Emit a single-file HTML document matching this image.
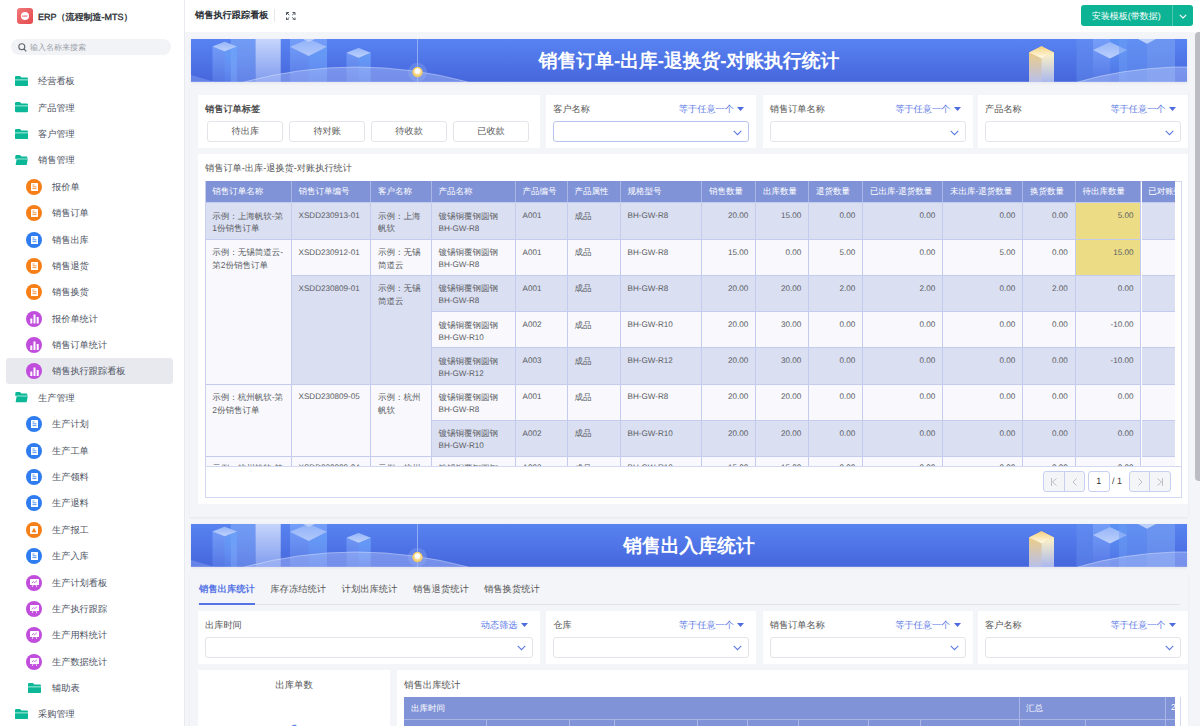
<!DOCTYPE html><html><head><meta charset="utf-8"><style>
*{box-sizing:border-box;margin:0;padding:0}
html,body{width:1200px;height:726px;overflow:hidden;background:#fff}
body{font-family:"Liberation Sans",sans-serif;color:#555;position:relative;text-rendering:geometricPrecision}
.abs{position:absolute}
#side{position:absolute;left:0;top:0;width:185px;height:726px;background:#fff;border-right:1px solid #e9eaef}
.logo{position:absolute;left:17px;top:8px;width:16px;height:16px;border-radius:3px;background:linear-gradient(135deg,#f0787a,#e5484d)}
.logo i{position:absolute;left:4px;top:4px;width:8px;height:8px;border-radius:50%;background:#fff}
.appname{position:absolute;left:38px;top:10px;font-size:9px;line-height:14px;color:#2b2f36;white-space:nowrap;-webkit-text-stroke:0.35px #2b2f36}
.search{position:absolute;left:11px;top:39px;width:160px;height:16px;border-radius:8px;background:#f2f3f6}
.search span{position:absolute;left:19px;top:2.8px;font-size:8px;line-height:12px;color:#9aa0a8}
.mi{position:absolute;left:0;height:26px;width:184px;font-size:9.2px;line-height:26px;color:#4c5262;white-space:nowrap}
.mi .t{position:absolute;top:0}
.fold{position:absolute;width:13px;height:10.3px;top:7.6px}
.circ{position:absolute;left:26px;top:5px;width:16px;height:16px;border-radius:50%}
#main{position:absolute;left:185px;top:0;width:1015px;height:726px;background:#f4f5f9}
#hdr{position:absolute;left:0;top:0;width:1015px;height:32px;background:#fff}
.htitle{position:absolute;left:10px;top:9px;font-size:9.2px;line-height:13px;font-weight:bold;color:#2b2f36;white-space:nowrap}
.sep{position:absolute;left:89px;top:9px;width:1px;height:13px;background:#e6e7eb}
.btn-g{position:absolute;left:895.8px;top:5.25px;width:112.2px;height:21px;border-radius:3px;background:#0db395;color:#fff;font-size:9px;line-height:21px}
.sb{display:none}
.sbthumb{position:absolute;left:1194.5px;top:32.4px;width:8px;height:449px;border-radius:4px;background:#bbbdc2}
.banner{position:absolute;left:191px;width:996px;height:43px;overflow:hidden;background:#4f74e6;box-shadow:0 1px 3px rgba(40,40,80,0.08)}
.banner .bt{position:absolute;left:0;top:0;width:100%;text-align:center;color:#fff;font-weight:bold;white-space:nowrap}
.sect{position:absolute;left:190px;width:998px;background:#f4f5f9;box-shadow:0 1px 2px rgba(40,40,80,0.07)}
.card{position:absolute;background:#fff}
.lbl{position:absolute;left:7px;top:8px;font-size:9.2px;line-height:13px;color:#555;white-space:nowrap}
.op{position:absolute;top:8px;font-size:9.2px;line-height:13px;color:#5a78e6;white-space:nowrap}
.sel{position:absolute;left:7px;top:26px;height:21px;border:1px solid #e3e5ea;border-radius:3px;background:#fff}
.tagb{position:absolute;top:25.5px;width:76px;height:21px;border:1px solid #e3e5ea;border-radius:3px;font-size:9.2px;line-height:19px;text-align:center;color:#555}
.th{position:absolute;top:0;height:21.6px;background:#8193d7;color:#fff;border-right:1px solid #aab6e6;font-size:8.5px;line-height:21.6px;padding:0 6.7px;white-space:nowrap;overflow:hidden}
.td{position:absolute;border-right:1px solid #c3cbee;border-top:1px solid #c3cbee;font-size:8.5px;line-height:12.6px;padding:6.5px 4px 0 6.7px;color:#5a5d63;overflow:hidden;word-break:break-all}
.td.r{text-align:right;padding-right:7px}
.lt{font-size:8.1px;position:relative;top:-0.7px}
.tab{top:584px;font-size:9.3px;line-height:10px;color:#555;white-space:nowrap}
.pgt{font-size:9px;line-height:21px}
.tbl{position:absolute;border-collapse:collapse;table-layout:fixed}
.tbl td{border:1px solid #c3cbee;font-size:8.6px;line-height:12.5px;vertical-align:top;padding:6px 6px 0 6px;color:#5a5d63;overflow:hidden;white-space:normal;word-break:break-all}
.tbl th{background:#8193d7;color:#fff;font-weight:normal;border:1px solid #aab6e6;font-size:8.6px;line-height:12px;text-align:left;padding:0 6px;height:21.5px;white-space:nowrap;overflow:hidden}
.tbl td.r{text-align:right}
.b{background:#dadff2}
.wt{background:#f8f8fd}
.y{background:#ecdc86}
</style></head><body>
<div id="side">
<div class="logo"><i></i><b style="position:absolute;left:4px;top:6.6px;width:8px;text-align:center;font-size:2.6px;line-height:3px;color:#e5484d;font-weight:bold">ERP</b></div><div class="appname">ERP（流程制造-MTS）</div>
<div class="search"><svg class="abs" style="left:7px;top:4px" width="9" height="9" viewBox="0 0 9 9"><circle cx="3.8" cy="3.8" r="3" fill="none" stroke="#5f646b" stroke-width="1.1"/><line x1="6" y1="6" x2="8.3" y2="8.3" stroke="#5f646b" stroke-width="1.1"/></svg><span>输入名称来搜索</span></div>
<div class="mi" style="top:68.30px">
<svg class="fold" style="left:14.8px" viewBox="0 0 13 10.3"><path d="M0 1.2Q0 0 1.2 0H5L6.4 1.6H11.8Q13 1.6 13 2.8V9.1Q13 10.3 11.8 10.3H1.2Q0 10.3 0 9.1Z" fill="#0bb797"/><rect x="0" y="3" width="13" height="1.6" fill="#6fd8c2"/></svg>
<span class="t" style="left:38px">经营看板</span></div>
<div class="mi" style="top:94.68px">
<svg class="fold" style="left:14.8px" viewBox="0 0 13 10.3"><path d="M0 1.2Q0 0 1.2 0H5L6.4 1.6H11.8Q13 1.6 13 2.8V9.1Q13 10.3 11.8 10.3H1.2Q0 10.3 0 9.1Z" fill="#0bb797"/><rect x="0" y="3" width="13" height="1.6" fill="#6fd8c2"/></svg>
<span class="t" style="left:38px">产品管理</span></div>
<div class="mi" style="top:121.06px">
<svg class="fold" style="left:14.8px" viewBox="0 0 13 10.3"><path d="M0 1.2Q0 0 1.2 0H5L6.4 1.6H11.8Q13 1.6 13 2.8V9.1Q13 10.3 11.8 10.3H1.2Q0 10.3 0 9.1Z" fill="#0bb797"/><rect x="0" y="3" width="13" height="1.6" fill="#6fd8c2"/></svg>
<span class="t" style="left:38px">客户管理</span></div>
<div class="mi" style="top:147.44px">
<svg class="fold" style="left:14.8px" viewBox="0 0 13 10.3"><path d="M0.3 1.2Q0.3 0 1.5 0H5L6.4 1.4H11.3Q12.3 1.4 12.3 2.4V4H0.3Z" fill="#0bb797"/><path d="M1.6 4.2H12.8L11.6 10.3H0.6Z" fill="#0bb797"/><path d="M1.6 3.8H12.8" stroke="#7fdcc8" stroke-width="0.9"/></svg>
<span class="t" style="left:38px">销售管理</span></div>
<div class="mi" style="top:173.82px">
<div class="circ" style="background:#f77f17"><svg class="abs" style="left:4.5px;top:4px" width="7" height="8" viewBox="0 0 7 8"><rect x="0" y="0" width="7" height="8" rx="0.6" fill="#fff"/><path d="M1.5 2H3.5M1.5 3.8H5.5M1.5 5.6H5.5" stroke="#f77f17" stroke-width="0.8"/></svg></div>
<span class="t" style="left:52px">报价单</span></div>
<div class="mi" style="top:200.20px">
<div class="circ" style="background:#f77f17"><svg class="abs" style="left:4.5px;top:4px" width="7" height="8" viewBox="0 0 7 8"><rect x="0" y="0" width="7" height="8" rx="0.6" fill="#fff"/><path d="M1.5 2H3.5M1.5 3.8H5.5M1.5 5.6H5.5" stroke="#f77f17" stroke-width="0.8"/></svg></div>
<span class="t" style="left:52px">销售订单</span></div>
<div class="mi" style="top:226.58px">
<div class="circ" style="background:#2f7cf0"><svg class="abs" style="left:4.5px;top:4px" width="7" height="8" viewBox="0 0 7 8"><rect x="0" y="0" width="7" height="8" rx="0.6" fill="#fff"/><path d="M1.5 2H3.5M1.5 3.8H5.5M1.5 5.6H5.5" stroke="#2f7cf0" stroke-width="0.8"/></svg></div>
<span class="t" style="left:52px">销售出库</span></div>
<div class="mi" style="top:252.96px">
<div class="circ" style="background:#f77f17"><svg class="abs" style="left:4.5px;top:4px" width="7" height="8" viewBox="0 0 7 8"><rect x="0" y="0" width="7" height="8" rx="0.6" fill="#fff"/><path d="M1.5 2H3.5M1.5 3.8H5.5M1.5 5.6H5.5" stroke="#f77f17" stroke-width="0.8"/></svg></div>
<span class="t" style="left:52px">销售退货</span></div>
<div class="mi" style="top:279.34px">
<div class="circ" style="background:#f77f17"><svg class="abs" style="left:4.5px;top:4px" width="7" height="8" viewBox="0 0 7 8"><rect x="0" y="0" width="7" height="8" rx="0.6" fill="#fff"/><path d="M1.5 2H3.5M1.5 3.8H5.5M1.5 5.6H5.5" stroke="#f77f17" stroke-width="0.8"/></svg></div>
<span class="t" style="left:52px">销售换货</span></div>
<div class="mi" style="top:305.72px">
<div class="circ" style="background:#c04ddc"><svg class="abs" style="left:4px;top:3.5px" width="9" height="9.5" viewBox="0 0 9 9.5"><rect x="0.3" y="4.5" width="2" height="5" fill="#fff"/><rect x="3.5" y="0.5" width="2" height="9" fill="#fff"/><rect x="6.7" y="3" width="2" height="6.5" fill="#fff"/></svg></div>
<span class="t" style="left:52px">报价单统计</span></div>
<div class="mi" style="top:332.10px">
<div class="circ" style="background:#c04ddc"><svg class="abs" style="left:4px;top:3.5px" width="9" height="9.5" viewBox="0 0 9 9.5"><rect x="0.3" y="4.5" width="2" height="5" fill="#fff"/><rect x="3.5" y="0.5" width="2" height="9" fill="#fff"/><rect x="6.7" y="3" width="2" height="6.5" fill="#fff"/></svg></div>
<span class="t" style="left:52px">销售订单统计</span></div>
<div class="mi" style="top:358.48px">
<div class="abs" style="left:6px;top:-0.6px;width:167px;height:26.4px;border-radius:3px;background:#e8e9ee"></div>
<div class="circ" style="background:#c04ddc"><svg class="abs" style="left:4px;top:3.5px" width="9" height="9.5" viewBox="0 0 9 9.5"><rect x="0.3" y="4.5" width="2" height="5" fill="#fff"/><rect x="3.5" y="0.5" width="2" height="9" fill="#fff"/><rect x="6.7" y="3" width="2" height="6.5" fill="#fff"/></svg></div>
<span class="t" style="left:52px">销售执行跟踪看板</span></div>
<div class="mi" style="top:384.86px">
<svg class="fold" style="left:14.8px" viewBox="0 0 13 10.3"><path d="M0.3 1.2Q0.3 0 1.5 0H5L6.4 1.4H11.3Q12.3 1.4 12.3 2.4V4H0.3Z" fill="#0bb797"/><path d="M1.6 4.2H12.8L11.6 10.3H0.6Z" fill="#0bb797"/><path d="M1.6 3.8H12.8" stroke="#7fdcc8" stroke-width="0.9"/></svg>
<span class="t" style="left:38px">生产管理</span></div>
<div class="mi" style="top:411.24px">
<div class="circ" style="background:#2f7cf0"><svg class="abs" style="left:4.5px;top:4px" width="7" height="8" viewBox="0 0 7 8"><rect x="0" y="0" width="7" height="8" rx="0.6" fill="#fff"/><path d="M1.5 2H3.5M1.5 3.8H5.5M1.5 5.6H5.5" stroke="#2f7cf0" stroke-width="0.8"/></svg></div>
<span class="t" style="left:52px">生产计划</span></div>
<div class="mi" style="top:437.62px">
<div class="circ" style="background:#2f7cf0"><svg class="abs" style="left:4.5px;top:4px" width="7" height="8" viewBox="0 0 7 8"><rect x="0" y="0" width="7" height="8" rx="0.6" fill="#fff"/><path d="M1.5 2H3.5M1.5 3.8H5.5M1.5 5.6H5.5" stroke="#2f7cf0" stroke-width="0.8"/></svg></div>
<span class="t" style="left:52px">生产工单</span></div>
<div class="mi" style="top:464.00px">
<div class="circ" style="background:#2f7cf0"><svg class="abs" style="left:4.5px;top:4px" width="7" height="8" viewBox="0 0 7 8"><rect x="0" y="0" width="7" height="8" rx="0.6" fill="#fff"/><path d="M1.5 2H3.5M1.5 3.8H5.5M1.5 5.6H5.5" stroke="#2f7cf0" stroke-width="0.8"/></svg></div>
<span class="t" style="left:52px">生产领料</span></div>
<div class="mi" style="top:490.38px">
<div class="circ" style="background:#2f7cf0"><svg class="abs" style="left:4.5px;top:4px" width="7" height="8" viewBox="0 0 7 8"><rect x="0" y="0" width="7" height="8" rx="0.6" fill="#fff"/><path d="M1.5 2H3.5M1.5 3.8H5.5M1.5 5.6H5.5" stroke="#2f7cf0" stroke-width="0.8"/></svg></div>
<span class="t" style="left:52px">生产退料</span></div>
<div class="mi" style="top:516.76px">
<div class="circ" style="background:#f77f17"><svg class="abs" style="left:4px;top:4px" width="8" height="8" viewBox="0 0 8 8"><rect x="0" y="0" width="8" height="8" rx="1" fill="#fff"/><path d="M4 1.8L6.4 6.2H1.6Z" fill="#f77f17"/></svg></div>
<span class="t" style="left:52px">生产报工</span></div>
<div class="mi" style="top:543.14px">
<div class="circ" style="background:#2f7cf0"><svg class="abs" style="left:4.5px;top:4px" width="7" height="8" viewBox="0 0 7 8"><rect x="0" y="0" width="7" height="8" rx="0.6" fill="#fff"/><path d="M1.5 2H3.5M1.5 3.8H5.5M1.5 5.6H5.5" stroke="#2f7cf0" stroke-width="0.8"/></svg></div>
<span class="t" style="left:52px">生产入库</span></div>
<div class="mi" style="top:569.52px">
<div class="circ" style="background:#c04ddc"><svg class="abs" style="left:3.5px;top:4px" width="9" height="8" viewBox="0 0 9 8"><rect x="0" y="0" width="9" height="6" rx="0.6" fill="#fff"/><path d="M1.8 4.2L3.4 2.6L4.8 3.6L7 1.6" stroke="#c04ddc" stroke-width="0.8" fill="none"/><path d="M3 6L2.2 8M6 6L6.8 8" stroke="#fff" stroke-width="0.8"/></svg></div>
<span class="t" style="left:52px">生产计划看板</span></div>
<div class="mi" style="top:595.90px">
<div class="circ" style="background:#c04ddc"><svg class="abs" style="left:3.5px;top:4px" width="9" height="8" viewBox="0 0 9 8"><rect x="0" y="0" width="9" height="6" rx="0.6" fill="#fff"/><path d="M1.8 4.2L3.4 2.6L4.8 3.6L7 1.6" stroke="#c04ddc" stroke-width="0.8" fill="none"/><path d="M3 6L2.2 8M6 6L6.8 8" stroke="#fff" stroke-width="0.8"/></svg></div>
<span class="t" style="left:52px">生产执行跟踪</span></div>
<div class="mi" style="top:622.28px">
<div class="circ" style="background:#c04ddc"><svg class="abs" style="left:3.5px;top:4px" width="9" height="8" viewBox="0 0 9 8"><rect x="0" y="0" width="9" height="6" rx="0.6" fill="#fff"/><path d="M1.8 4.2L3.4 2.6L4.8 3.6L7 1.6" stroke="#c04ddc" stroke-width="0.8" fill="none"/><path d="M3 6L2.2 8M6 6L6.8 8" stroke="#fff" stroke-width="0.8"/></svg></div>
<span class="t" style="left:52px">生产用料统计</span></div>
<div class="mi" style="top:648.66px">
<div class="circ" style="background:#c04ddc"><svg class="abs" style="left:3.5px;top:4px" width="9" height="8" viewBox="0 0 9 8"><rect x="0" y="0" width="9" height="6" rx="0.6" fill="#fff"/><path d="M1.8 4.2L3.4 2.6L4.8 3.6L7 1.6" stroke="#c04ddc" stroke-width="0.8" fill="none"/><path d="M3 6L2.2 8M6 6L6.8 8" stroke="#fff" stroke-width="0.8"/></svg></div>
<span class="t" style="left:52px">生产数据统计</span></div>
<div class="mi" style="top:675.04px">
<svg class="fold" style="left:28px" viewBox="0 0 13 10.3"><path d="M0 1.2Q0 0 1.2 0H5L6.4 1.6H11.8Q13 1.6 13 2.8V9.1Q13 10.3 11.8 10.3H1.2Q0 10.3 0 9.1Z" fill="#0bb797"/><rect x="0" y="3" width="13" height="1.6" fill="#6fd8c2"/></svg>
<span class="t" style="left:52px">辅助表</span></div>
<div class="mi" style="top:701.42px">
<svg class="fold" style="left:14.8px" viewBox="0 0 13 10.3"><path d="M0 1.2Q0 0 1.2 0H5L6.4 1.6H11.8Q13 1.6 13 2.8V9.1Q13 10.3 11.8 10.3H1.2Q0 10.3 0 9.1Z" fill="#0bb797"/><rect x="0" y="3" width="13" height="1.6" fill="#6fd8c2"/></svg>
<span class="t" style="left:38px">采购管理</span></div>
</div>
<div id="main">
<div id="hdr"><div class="htitle">销售执行跟踪看板</div><div class="sep"></div>
<svg class="abs" style="left:101px;top:11.5px" width="9.5" height="8.5" viewBox="0 0 9.5 8.5" fill="none" stroke="#4f5866" stroke-width="1"><path d="M0.5 3V0.5H3M0.8 0.8L3.3 3.1M6.5 0.5H9V3M8.7 0.8L6.2 3.1M9 5.5V8H6.5M8.7 7.7L6.2 5.4M3 8H0.5V5.5M0.8 7.7L3.3 5.4"/></svg>
<div class="btn-g"><span class="abs" style="left:11px;top:0.5px">安装模板(带数据)</span><div class="abs" style="left:91.5px;top:0;width:1px;height:21px;background:#4fc9ae"></div><svg class="abs" style="left:98.5px;top:8.5px" width="8" height="5" viewBox="0 0 8 5"><path d="M0.8 0.8L4 4L7.2 0.8" stroke="#fff" stroke-width="1.1" fill="none"/></svg></div>
</div>
</div>
<div class="banner" style="top:39px"><svg class="abs" style="left:0;top:0" width="996" height="43" viewBox="0 0 996 43">
<defs>
<linearGradient id="bg0" x1="0" y1="0" x2="0" y2="1"><stop offset="0" stop-color="#5883f1"/><stop offset="1" stop-color="#4666dc"/></linearGradient>
<linearGradient id="fL" x1="0" y1="0" x2="0" y2="1"><stop offset="0" stop-color="#8cb4ff" stop-opacity="0.55"/><stop offset="1" stop-color="#8cb4ff" stop-opacity="0.2"/></linearGradient>
<linearGradient id="fR" x1="0" y1="0" x2="0" y2="1"><stop offset="0" stop-color="#5d9cf5" stop-opacity="0.6"/><stop offset="1" stop-color="#6aa0ff" stop-opacity="0.15"/></linearGradient>
<linearGradient id="pM" x1="0" y1="0" x2="0" y2="1"><stop offset="0" stop-color="#79a4f6" stop-opacity="0.75"/><stop offset="1" stop-color="#7fa0f0" stop-opacity="0.5"/></linearGradient>
<linearGradient id="pC" x1="0" y1="0" x2="0" y2="1"><stop offset="0" stop-color="#c6d5fc"/><stop offset="1" stop-color="#809cee"/></linearGradient>
<linearGradient id="dm" x1="0" y1="0" x2="0" y2="1"><stop offset="0" stop-color="#97b6f8"/><stop offset="1" stop-color="#bcd0fc"/></linearGradient>
<linearGradient id="gL" x1="0" y1="0" x2="0" y2="1"><stop offset="0" stop-color="#f6cf72"/><stop offset="1" stop-color="#b9c0ea"/></linearGradient>
<linearGradient id="gR" x1="0" y1="0" x2="0" y2="1"><stop offset="0" stop-color="#fff3c4"/><stop offset="1" stop-color="#aab8ee"/></linearGradient>
<linearGradient id="gT" x1="0" y1="0" x2="0" y2="1"><stop offset="0" stop-color="#f6d27e"/><stop offset="1" stop-color="#fffbea"/></linearGradient>
<radialGradient id="dot" cx="0.5" cy="0.5" r="0.5" fx="0.5" fy="0.32"><stop offset="0" stop-color="#fff"/><stop offset="0.38" stop-color="#fff"/><stop offset="0.6" stop-color="#f6d98a"/><stop offset="0.85" stop-color="#eec766"/><stop offset="1" stop-color="#eec766" stop-opacity="0"/></radialGradient><radialGradient id="glow"><stop offset="0" stop-color="#f6e2a8" stop-opacity="0.35"/><stop offset="1" stop-color="#c9d6ff" stop-opacity="0"/></radialGradient>
</defs>
<rect width="996" height="43" fill="url(#bg0)"/>
<path d="M0 36L24 43H0Z" fill="#8aa4f2" opacity="0.45"/>
<rect x="39.8" y="0" width="24.7" height="43" fill="url(#pM)"/>
<rect x="64.5" y="0" width="25.2" height="43" fill="url(#pC)"/>
<path d="M21.5 7.4L33.6 2.7L45.9 7.4V43H21.5Z" fill="url(#fL)"/>
<path d="M33.6 12.3L45.9 7.4V43H33.6Z" fill="url(#fR)"/>
<path d="M21.5 7.4L33.6 2.7L45.9 7.4L33.6 12.3Z" fill="url(#dm)"/>
<path d="M99 0H136V43H99Z" fill="url(#fL)"/>
<path d="M117.7 16.9L136 7.7V43H117.7Z" fill="url(#fR)"/>
<path d="M99 7.7L117.7 0L136 7.7L117.7 16.9Z" fill="url(#dm)" opacity="0.85"/>
<path d="M112 0H124L117.7 3.1Z" fill="#bcd0fc" opacity="0.9"/>
<path d="M155.5 13.7L167.6 8.9L179.7 13.7V43H155.5Z" fill="url(#fL)"/>
<path d="M167.6 18.7L179.7 13.7V43H167.6Z" fill="url(#fR)"/>
<path d="M155.5 13.7L167.6 8.9L179.7 13.7L167.6 18.7Z" fill="url(#dm)"/>
<path d="M53 43Q165 13 277 43Z" fill="#b4c6fb" opacity="0.42"/>
<path d="M53 43Q165 13 277 43" fill="none" stroke="#dbe5ff" stroke-width="0.7" opacity="0.7"/>
<rect x="226.2" y="0" width="0.8" height="43" fill="#a9c0fb" opacity="0.9"/>
<circle cx="226.5" cy="33.2" r="9.5" fill="#9fb6f6" opacity="0.28"/>
<circle cx="226.5" cy="33.2" r="5.6" fill="url(#dot)"/>
<path d="M838 13.6L850.5 7.3L863 13.6V43H838Z" fill="url(#gL)"/>
<path d="M850.5 19.3L863 13.6V43H850.5Z" fill="url(#gR)"/>
<path d="M838 13.6L850.5 7.3L863 13.6L850.5 19.3Z" fill="url(#gT)"/>
<rect x="885.5" y="0" width="16.5" height="43" fill="#6f9af2" opacity="0.35"/>
<path d="M902 0H919V43H902Z" fill="url(#fL)"/>
<path d="M919 0H936V43H919Z" fill="url(#fR)"/>
<path d="M902 11L919 3L936 11L919 19.5Z" fill="url(#dm)"/>
<rect x="928" y="0" width="28" height="43" fill="#6b9cf3" opacity="0.5"/>
<rect x="956" y="0" width="28" height="43" fill="#7ea6f3" opacity="0.55"/>
<path d="M947 0H965L956 4.8Z" fill="#bcd0fc"/>
<path d="M887 43Q930 30 984 28H996V43Z" fill="#b4c6fb" opacity="0.45"/>
<path d="M887 43Q930 30 984 28H996" fill="none" stroke="#dbe5ff" stroke-width="0.7" opacity="0.7"/>
<rect x="0" y="42.3" width="996" height="0.7" fill="#b9c8f8" opacity="0.4"/>
</svg><div class="bt" style="top:10.5px;font-size:18.8px;line-height:22px">销售订单-出库-退换货-对账执行统计</div></div>
<div class="banner" style="top:524px"><svg class="abs" style="left:0;top:0" width="996" height="43" viewBox="0 0 996 43">
<defs>
<linearGradient id="bg0" x1="0" y1="0" x2="0" y2="1"><stop offset="0" stop-color="#5883f1"/><stop offset="1" stop-color="#4666dc"/></linearGradient>
<linearGradient id="fL" x1="0" y1="0" x2="0" y2="1"><stop offset="0" stop-color="#8cb4ff" stop-opacity="0.55"/><stop offset="1" stop-color="#8cb4ff" stop-opacity="0.2"/></linearGradient>
<linearGradient id="fR" x1="0" y1="0" x2="0" y2="1"><stop offset="0" stop-color="#5d9cf5" stop-opacity="0.6"/><stop offset="1" stop-color="#6aa0ff" stop-opacity="0.15"/></linearGradient>
<linearGradient id="pM" x1="0" y1="0" x2="0" y2="1"><stop offset="0" stop-color="#79a4f6" stop-opacity="0.75"/><stop offset="1" stop-color="#7fa0f0" stop-opacity="0.5"/></linearGradient>
<linearGradient id="pC" x1="0" y1="0" x2="0" y2="1"><stop offset="0" stop-color="#c6d5fc"/><stop offset="1" stop-color="#809cee"/></linearGradient>
<linearGradient id="dm" x1="0" y1="0" x2="0" y2="1"><stop offset="0" stop-color="#97b6f8"/><stop offset="1" stop-color="#bcd0fc"/></linearGradient>
<linearGradient id="gL" x1="0" y1="0" x2="0" y2="1"><stop offset="0" stop-color="#f6cf72"/><stop offset="1" stop-color="#b9c0ea"/></linearGradient>
<linearGradient id="gR" x1="0" y1="0" x2="0" y2="1"><stop offset="0" stop-color="#fff3c4"/><stop offset="1" stop-color="#aab8ee"/></linearGradient>
<linearGradient id="gT" x1="0" y1="0" x2="0" y2="1"><stop offset="0" stop-color="#f6d27e"/><stop offset="1" stop-color="#fffbea"/></linearGradient>
<radialGradient id="dot" cx="0.5" cy="0.5" r="0.5" fx="0.5" fy="0.32"><stop offset="0" stop-color="#fff"/><stop offset="0.38" stop-color="#fff"/><stop offset="0.6" stop-color="#f6d98a"/><stop offset="0.85" stop-color="#eec766"/><stop offset="1" stop-color="#eec766" stop-opacity="0"/></radialGradient><radialGradient id="glow"><stop offset="0" stop-color="#f6e2a8" stop-opacity="0.35"/><stop offset="1" stop-color="#c9d6ff" stop-opacity="0"/></radialGradient>
</defs>
<rect width="996" height="43" fill="url(#bg0)"/>
<path d="M0 36L24 43H0Z" fill="#8aa4f2" opacity="0.45"/>
<rect x="39.8" y="0" width="24.7" height="43" fill="url(#pM)"/>
<rect x="64.5" y="0" width="25.2" height="43" fill="url(#pC)"/>
<path d="M21.5 7.4L33.6 2.7L45.9 7.4V43H21.5Z" fill="url(#fL)"/>
<path d="M33.6 12.3L45.9 7.4V43H33.6Z" fill="url(#fR)"/>
<path d="M21.5 7.4L33.6 2.7L45.9 7.4L33.6 12.3Z" fill="url(#dm)"/>
<path d="M99 0H136V43H99Z" fill="url(#fL)"/>
<path d="M117.7 16.9L136 7.7V43H117.7Z" fill="url(#fR)"/>
<path d="M99 7.7L117.7 0L136 7.7L117.7 16.9Z" fill="url(#dm)" opacity="0.85"/>
<path d="M112 0H124L117.7 3.1Z" fill="#bcd0fc" opacity="0.9"/>
<path d="M155.5 13.7L167.6 8.9L179.7 13.7V43H155.5Z" fill="url(#fL)"/>
<path d="M167.6 18.7L179.7 13.7V43H167.6Z" fill="url(#fR)"/>
<path d="M155.5 13.7L167.6 8.9L179.7 13.7L167.6 18.7Z" fill="url(#dm)"/>
<path d="M53 43Q165 13 277 43Z" fill="#b4c6fb" opacity="0.42"/>
<path d="M53 43Q165 13 277 43" fill="none" stroke="#dbe5ff" stroke-width="0.7" opacity="0.7"/>
<rect x="226.2" y="0" width="0.8" height="43" fill="#a9c0fb" opacity="0.9"/>
<circle cx="226.5" cy="33.2" r="9.5" fill="#9fb6f6" opacity="0.28"/>
<circle cx="226.5" cy="33.2" r="5.6" fill="url(#dot)"/>
<path d="M838 13.6L850.5 7.3L863 13.6V43H838Z" fill="url(#gL)"/>
<path d="M850.5 19.3L863 13.6V43H850.5Z" fill="url(#gR)"/>
<path d="M838 13.6L850.5 7.3L863 13.6L850.5 19.3Z" fill="url(#gT)"/>
<rect x="885.5" y="0" width="16.5" height="43" fill="#6f9af2" opacity="0.35"/>
<path d="M902 0H919V43H902Z" fill="url(#fL)"/>
<path d="M919 0H936V43H919Z" fill="url(#fR)"/>
<path d="M902 11L919 3L936 11L919 19.5Z" fill="url(#dm)"/>
<rect x="928" y="0" width="28" height="43" fill="#6b9cf3" opacity="0.5"/>
<rect x="956" y="0" width="28" height="43" fill="#7ea6f3" opacity="0.55"/>
<path d="M947 0H965L956 4.8Z" fill="#bcd0fc"/>
<path d="M887 43Q930 30 984 28H996V43Z" fill="#b4c6fb" opacity="0.45"/>
<path d="M887 43Q930 30 984 28H996" fill="none" stroke="#dbe5ff" stroke-width="0.7" opacity="0.7"/>
<rect x="0" y="42.3" width="996" height="0.7" fill="#b9c8f8" opacity="0.4"/>
</svg><div class="bt" style="top:10.5px;font-size:18.8px;line-height:22px">销售出入库统计</div></div>
<div class="sect" style="top:89px;height:428px"></div>
<div class="card" style="left:198px;top:95px;width:342px;height:53px">
<div class="lbl" style="color:#333;top:7.5px;-webkit-text-stroke:0.2px #333">销售订单标签</div>
<div class="tagb" style="left:9.3px">待出库</div>
<div class="tagb" style="left:91.2px">待对账</div>
<div class="tagb" style="left:173.1px">待收款</div>
<div class="tagb" style="left:255.0px">已收款</div>
</div>
<div class="card" style="left:546.2px;top:95.0px;width:210.3px;height:53px"><div class="lbl">客户名称</div><div class="op" style="right:12px;padding-right:10.5px">等于任意一个<svg class="abs" style="right:0;top:4px" width="7" height="4" viewBox="0 0 7 4"><path d="M0 0H7L3.5 4Z" fill="#4d6ae0"/></svg></div><div class="sel" style="width:196.3px;border-color:#b9c4f0"><svg class="abs" style="right:6px;top:7.5px" width="9" height="6" viewBox="0 0 9 6"><path d="M0.7 0.9L4.5 4.7L8.3 0.9" stroke="#5a78e6" stroke-width="1.05" fill="none"/></svg></div></div>
<div class="card" style="left:762.8px;top:95.0px;width:210.0px;height:53px"><div class="lbl">销售订单名称</div><div class="op" style="right:12px;padding-right:10.5px">等于任意一个<svg class="abs" style="right:0;top:4px" width="7" height="4" viewBox="0 0 7 4"><path d="M0 0H7L3.5 4Z" fill="#4d6ae0"/></svg></div><div class="sel" style="width:196.0px;"><svg class="abs" style="right:6px;top:7.5px" width="9" height="6" viewBox="0 0 9 6"><path d="M0.7 0.9L4.5 4.7L8.3 0.9" stroke="#5a78e6" stroke-width="1.05" fill="none"/></svg></div></div>
<div class="card" style="left:978.0px;top:95.0px;width:210.0px;height:53px"><div class="lbl">产品名称</div><div class="op" style="right:12px;padding-right:10.5px">等于任意一个<svg class="abs" style="right:0;top:4px" width="7" height="4" viewBox="0 0 7 4"><path d="M0 0H7L3.5 4Z" fill="#4d6ae0"/></svg></div><div class="sel" style="width:196.0px;"><svg class="abs" style="right:6px;top:7.5px" width="9" height="6" viewBox="0 0 9 6"><path d="M0.7 0.9L4.5 4.7L8.3 0.9" stroke="#5a78e6" stroke-width="1.05" fill="none"/></svg></div></div>
<div class="card" style="left:198px;top:154px;width:990px;height:350px">
<div class="abs" style="left:7px;top:8px;font-size:9.2px;line-height:13px;color:#555;white-space:nowrap">销售订单-出库-退换货-对账执行统计</div>
<div class="abs" style="left:6.5px;top:26.5px;width:977px;height:317px;border:1px solid #d3d9f2"></div>
</div>
<div class="abs" style="left:204.5px;top:181px;width:970.6px;height:285.2px;overflow:hidden"><div class="th" style="left:0.0px;width:87.3px;padding-left:7.7px">销售订单名称</div><div class="th" style="left:87.3px;width:79.5px">销售订单编号</div><div class="th" style="left:166.8px;width:60.5px">客户名称</div><div class="th" style="left:227.3px;width:84.0px">产品名称</div><div class="th" style="left:311.3px;width:52.0px">产品编号</div><div class="th" style="left:363.3px;width:53.0px">产品属性</div><div class="th" style="left:416.3px;width:81.5px">规格型号</div><div class="th" style="left:497.8px;width:54.0px">销售数量</div><div class="th" style="left:551.8px;width:53.0px">出库数量</div><div class="th" style="left:604.8px;width:54.0px">退货数量</div><div class="th" style="left:658.8px;width:80.0px">已出库-退货数量</div><div class="th" style="left:738.8px;width:80.0px">未出库-退货数量</div><div class="th" style="left:818.8px;width:52.5px">换货数量</div><div class="th" style="left:871.3px;width:65.7px">待出库数量</div><div class="th" style="left:937.0px;width:74.3px">已对账数量</div><div class="td" style="left:0.0px;top:21.4px;width:87.3px;height:36.2px;background:#dadff2;padding-left:7.7px">示例：上海帆软-第1份销售订单</div><div class="td" style="left:87.3px;top:21.4px;width:79.5px;height:36.2px;background:#dadff2"><span class="lt">XSDD230913-01</span></div><div class="td" style="left:166.8px;top:21.4px;width:60.5px;height:36.2px;background:#dadff2">示例：上海帆软</div><div class="td" style="left:0.0px;top:57.7px;width:87.3px;height:145.0px;background:#f8f8fd;padding-left:7.7px">示例：无锡简道云-第2份销售订单</div><div class="td" style="left:87.3px;top:57.7px;width:79.5px;height:36.2px;background:#f8f8fd"><span class="lt">XSDD230912-01</span></div><div class="td" style="left:166.8px;top:57.7px;width:60.5px;height:36.2px;background:#f8f8fd">示例：无锡简道云</div><div class="td" style="left:87.3px;top:93.9px;width:79.5px;height:108.8px;background:#dadff2"><span class="lt">XSDD230809-01</span></div><div class="td" style="left:166.8px;top:93.9px;width:60.5px;height:108.8px;background:#dadff2">示例：无锡简道云</div><div class="td" style="left:0.0px;top:202.6px;width:87.3px;height:72.5px;background:#f8f8fd;padding-left:7.7px">示例：杭州帆软-第2份销售订单</div><div class="td" style="left:87.3px;top:202.6px;width:79.5px;height:72.5px;background:#f8f8fd"><span class="lt">XSDD230809-05</span></div><div class="td" style="left:166.8px;top:202.6px;width:60.5px;height:72.5px;background:#f8f8fd">示例：杭州帆软</div><div class="td" style="left:0.0px;top:275.1px;width:87.3px;height:36.2px;background:#f8f8fd;padding-left:7.7px;padding-top:4.8px">示例：杭州帆软-第3份销售订单</div><div class="td" style="left:87.3px;top:275.1px;width:79.5px;height:36.2px;background:#f8f8fd;padding-top:4.8px"><span class="lt">XSDD230809-04</span></div><div class="td" style="left:166.8px;top:275.1px;width:60.5px;height:36.2px;background:#f8f8fd;padding-top:4.8px">示例：杭州帆软</div><div class="td" style="left:227.3px;top:21.4px;width:84.0px;height:36.2px;background:#dadff2">镀锡铜覆钢圆钢<br><span class="lt">BH-GW-R8</span></div><div class="td" style="left:311.3px;top:21.4px;width:52.0px;height:36.2px;background:#dadff2"><span class="lt">A001</span></div><div class="td" style="left:363.3px;top:21.4px;width:53.0px;height:36.2px;background:#dadff2">成品</div><div class="td" style="left:416.3px;top:21.4px;width:81.5px;height:36.2px;background:#dadff2"><span class="lt">BH-GW-R8</span></div><div class="td r" style="left:497.8px;top:21.4px;width:54.0px;height:36.2px;background:#dadff2"><span class="lt">20.00</span></div><div class="td r" style="left:551.8px;top:21.4px;width:53.0px;height:36.2px;background:#dadff2"><span class="lt">15.00</span></div><div class="td r" style="left:604.8px;top:21.4px;width:54.0px;height:36.2px;background:#dadff2"><span class="lt">0.00</span></div><div class="td r" style="left:658.8px;top:21.4px;width:80.0px;height:36.2px;background:#dadff2"><span class="lt">0.00</span></div><div class="td r" style="left:738.8px;top:21.4px;width:80.0px;height:36.2px;background:#dadff2"><span class="lt">0.00</span></div><div class="td r" style="left:818.8px;top:21.4px;width:52.5px;height:36.2px;background:#dadff2"><span class="lt">0.00</span></div><div class="td r" style="left:871.3px;top:21.4px;width:65.7px;height:36.2px;background:#ecdc86"><span class="lt">5.00</span></div><div class="td" style="left:937.0px;top:21.4px;width:74.3px;height:36.2px;background:#dadff2"></div><div class="td" style="left:227.3px;top:57.7px;width:84.0px;height:36.2px;background:#f8f8fd">镀锡铜覆钢圆钢<br><span class="lt">BH-GW-R8</span></div><div class="td" style="left:311.3px;top:57.7px;width:52.0px;height:36.2px;background:#f8f8fd"><span class="lt">A001</span></div><div class="td" style="left:363.3px;top:57.7px;width:53.0px;height:36.2px;background:#f8f8fd">成品</div><div class="td" style="left:416.3px;top:57.7px;width:81.5px;height:36.2px;background:#f8f8fd"><span class="lt">BH-GW-R8</span></div><div class="td r" style="left:497.8px;top:57.7px;width:54.0px;height:36.2px;background:#f8f8fd"><span class="lt">15.00</span></div><div class="td r" style="left:551.8px;top:57.7px;width:53.0px;height:36.2px;background:#f8f8fd"><span class="lt">0.00</span></div><div class="td r" style="left:604.8px;top:57.7px;width:54.0px;height:36.2px;background:#f8f8fd"><span class="lt">5.00</span></div><div class="td r" style="left:658.8px;top:57.7px;width:80.0px;height:36.2px;background:#f8f8fd"><span class="lt">0.00</span></div><div class="td r" style="left:738.8px;top:57.7px;width:80.0px;height:36.2px;background:#f8f8fd"><span class="lt">5.00</span></div><div class="td r" style="left:818.8px;top:57.7px;width:52.5px;height:36.2px;background:#f8f8fd"><span class="lt">0.00</span></div><div class="td r" style="left:871.3px;top:57.7px;width:65.7px;height:36.2px;background:#ecdc86"><span class="lt">15.00</span></div><div class="td" style="left:937.0px;top:57.7px;width:74.3px;height:36.2px;background:#f8f8fd"></div><div class="td" style="left:227.3px;top:93.9px;width:84.0px;height:36.2px;background:#dadff2">镀锡铜覆钢圆钢<br><span class="lt">BH-GW-R8</span></div><div class="td" style="left:311.3px;top:93.9px;width:52.0px;height:36.2px;background:#dadff2"><span class="lt">A001</span></div><div class="td" style="left:363.3px;top:93.9px;width:53.0px;height:36.2px;background:#dadff2">成品</div><div class="td" style="left:416.3px;top:93.9px;width:81.5px;height:36.2px;background:#dadff2"><span class="lt">BH-GW-R8</span></div><div class="td r" style="left:497.8px;top:93.9px;width:54.0px;height:36.2px;background:#dadff2"><span class="lt">20.00</span></div><div class="td r" style="left:551.8px;top:93.9px;width:53.0px;height:36.2px;background:#dadff2"><span class="lt">20.00</span></div><div class="td r" style="left:604.8px;top:93.9px;width:54.0px;height:36.2px;background:#dadff2"><span class="lt">2.00</span></div><div class="td r" style="left:658.8px;top:93.9px;width:80.0px;height:36.2px;background:#dadff2"><span class="lt">2.00</span></div><div class="td r" style="left:738.8px;top:93.9px;width:80.0px;height:36.2px;background:#dadff2"><span class="lt">0.00</span></div><div class="td r" style="left:818.8px;top:93.9px;width:52.5px;height:36.2px;background:#dadff2"><span class="lt">2.00</span></div><div class="td r" style="left:871.3px;top:93.9px;width:65.7px;height:36.2px;background:#dadff2"><span class="lt">0.00</span></div><div class="td" style="left:937.0px;top:93.9px;width:74.3px;height:36.2px;background:#dadff2"></div><div class="td" style="left:227.3px;top:130.1px;width:84.0px;height:36.2px;background:#f8f8fd">镀锡铜覆钢圆钢<br><span class="lt">BH-GW-R10</span></div><div class="td" style="left:311.3px;top:130.1px;width:52.0px;height:36.2px;background:#f8f8fd"><span class="lt">A002</span></div><div class="td" style="left:363.3px;top:130.1px;width:53.0px;height:36.2px;background:#f8f8fd">成品</div><div class="td" style="left:416.3px;top:130.1px;width:81.5px;height:36.2px;background:#f8f8fd"><span class="lt">BH-GW-R10</span></div><div class="td r" style="left:497.8px;top:130.1px;width:54.0px;height:36.2px;background:#f8f8fd"><span class="lt">20.00</span></div><div class="td r" style="left:551.8px;top:130.1px;width:53.0px;height:36.2px;background:#f8f8fd"><span class="lt">30.00</span></div><div class="td r" style="left:604.8px;top:130.1px;width:54.0px;height:36.2px;background:#f8f8fd"><span class="lt">0.00</span></div><div class="td r" style="left:658.8px;top:130.1px;width:80.0px;height:36.2px;background:#f8f8fd"><span class="lt">0.00</span></div><div class="td r" style="left:738.8px;top:130.1px;width:80.0px;height:36.2px;background:#f8f8fd"><span class="lt">0.00</span></div><div class="td r" style="left:818.8px;top:130.1px;width:52.5px;height:36.2px;background:#f8f8fd"><span class="lt">0.00</span></div><div class="td r" style="left:871.3px;top:130.1px;width:65.7px;height:36.2px;background:#f8f8fd"><span class="lt">-10.00</span></div><div class="td" style="left:937.0px;top:130.1px;width:74.3px;height:36.2px;background:#f8f8fd"></div><div class="td" style="left:227.3px;top:166.4px;width:84.0px;height:36.2px;background:#dadff2">镀锡铜覆钢圆钢<br><span class="lt">BH-GW-R12</span></div><div class="td" style="left:311.3px;top:166.4px;width:52.0px;height:36.2px;background:#dadff2"><span class="lt">A003</span></div><div class="td" style="left:363.3px;top:166.4px;width:53.0px;height:36.2px;background:#dadff2">成品</div><div class="td" style="left:416.3px;top:166.4px;width:81.5px;height:36.2px;background:#dadff2"><span class="lt">BH-GW-R12</span></div><div class="td r" style="left:497.8px;top:166.4px;width:54.0px;height:36.2px;background:#dadff2"><span class="lt">20.00</span></div><div class="td r" style="left:551.8px;top:166.4px;width:53.0px;height:36.2px;background:#dadff2"><span class="lt">30.00</span></div><div class="td r" style="left:604.8px;top:166.4px;width:54.0px;height:36.2px;background:#dadff2"><span class="lt">0.00</span></div><div class="td r" style="left:658.8px;top:166.4px;width:80.0px;height:36.2px;background:#dadff2"><span class="lt">0.00</span></div><div class="td r" style="left:738.8px;top:166.4px;width:80.0px;height:36.2px;background:#dadff2"><span class="lt">0.00</span></div><div class="td r" style="left:818.8px;top:166.4px;width:52.5px;height:36.2px;background:#dadff2"><span class="lt">0.00</span></div><div class="td r" style="left:871.3px;top:166.4px;width:65.7px;height:36.2px;background:#dadff2"><span class="lt">-10.00</span></div><div class="td" style="left:937.0px;top:166.4px;width:74.3px;height:36.2px;background:#dadff2"></div><div class="td" style="left:227.3px;top:202.6px;width:84.0px;height:36.2px;background:#f8f8fd">镀锡铜覆钢圆钢<br><span class="lt">BH-GW-R8</span></div><div class="td" style="left:311.3px;top:202.6px;width:52.0px;height:36.2px;background:#f8f8fd"><span class="lt">A001</span></div><div class="td" style="left:363.3px;top:202.6px;width:53.0px;height:36.2px;background:#f8f8fd">成品</div><div class="td" style="left:416.3px;top:202.6px;width:81.5px;height:36.2px;background:#f8f8fd"><span class="lt">BH-GW-R8</span></div><div class="td r" style="left:497.8px;top:202.6px;width:54.0px;height:36.2px;background:#f8f8fd"><span class="lt">20.00</span></div><div class="td r" style="left:551.8px;top:202.6px;width:53.0px;height:36.2px;background:#f8f8fd"><span class="lt">20.00</span></div><div class="td r" style="left:604.8px;top:202.6px;width:54.0px;height:36.2px;background:#f8f8fd"><span class="lt">0.00</span></div><div class="td r" style="left:658.8px;top:202.6px;width:80.0px;height:36.2px;background:#f8f8fd"><span class="lt">0.00</span></div><div class="td r" style="left:738.8px;top:202.6px;width:80.0px;height:36.2px;background:#f8f8fd"><span class="lt">0.00</span></div><div class="td r" style="left:818.8px;top:202.6px;width:52.5px;height:36.2px;background:#f8f8fd"><span class="lt">0.00</span></div><div class="td r" style="left:871.3px;top:202.6px;width:65.7px;height:36.2px;background:#f8f8fd"><span class="lt">0.00</span></div><div class="td" style="left:937.0px;top:202.6px;width:74.3px;height:36.2px;background:#f8f8fd"></div><div class="td" style="left:227.3px;top:238.9px;width:84.0px;height:36.2px;background:#dadff2">镀锡铜覆钢圆钢<br><span class="lt">BH-GW-R10</span></div><div class="td" style="left:311.3px;top:238.9px;width:52.0px;height:36.2px;background:#dadff2"><span class="lt">A002</span></div><div class="td" style="left:363.3px;top:238.9px;width:53.0px;height:36.2px;background:#dadff2">成品</div><div class="td" style="left:416.3px;top:238.9px;width:81.5px;height:36.2px;background:#dadff2"><span class="lt">BH-GW-R10</span></div><div class="td r" style="left:497.8px;top:238.9px;width:54.0px;height:36.2px;background:#dadff2"><span class="lt">20.00</span></div><div class="td r" style="left:551.8px;top:238.9px;width:53.0px;height:36.2px;background:#dadff2"><span class="lt">20.00</span></div><div class="td r" style="left:604.8px;top:238.9px;width:54.0px;height:36.2px;background:#dadff2"><span class="lt">0.00</span></div><div class="td r" style="left:658.8px;top:238.9px;width:80.0px;height:36.2px;background:#dadff2"><span class="lt">0.00</span></div><div class="td r" style="left:738.8px;top:238.9px;width:80.0px;height:36.2px;background:#dadff2"><span class="lt">0.00</span></div><div class="td r" style="left:818.8px;top:238.9px;width:52.5px;height:36.2px;background:#dadff2"><span class="lt">0.00</span></div><div class="td r" style="left:871.3px;top:238.9px;width:65.7px;height:36.2px;background:#dadff2"><span class="lt">0.00</span></div><div class="td" style="left:937.0px;top:238.9px;width:74.3px;height:36.2px;background:#dadff2"></div><div class="td" style="left:227.3px;top:275.1px;width:84.0px;height:36.2px;background:#f8f8fd;padding-top:4.8px">镀锡铜覆钢圆钢<br><span class="lt">BH-GW-R12</span></div><div class="td" style="left:311.3px;top:275.1px;width:52.0px;height:36.2px;background:#f8f8fd;padding-top:4.8px"><span class="lt">A003</span></div><div class="td" style="left:363.3px;top:275.1px;width:53.0px;height:36.2px;background:#f8f8fd;padding-top:4.8px">成品</div><div class="td" style="left:416.3px;top:275.1px;width:81.5px;height:36.2px;background:#f8f8fd;padding-top:4.8px"><span class="lt">BH-GW-R12</span></div><div class="td r" style="left:497.8px;top:275.1px;width:54.0px;height:36.2px;background:#f8f8fd;padding-top:4.8px"><span class="lt">15.00</span></div><div class="td r" style="left:551.8px;top:275.1px;width:53.0px;height:36.2px;background:#f8f8fd;padding-top:4.8px"><span class="lt">15.00</span></div><div class="td r" style="left:604.8px;top:275.1px;width:54.0px;height:36.2px;background:#f8f8fd;padding-top:4.8px"><span class="lt">0.00</span></div><div class="td r" style="left:658.8px;top:275.1px;width:80.0px;height:36.2px;background:#f8f8fd;padding-top:4.8px"><span class="lt">0.00</span></div><div class="td r" style="left:738.8px;top:275.1px;width:80.0px;height:36.2px;background:#f8f8fd;padding-top:4.8px"><span class="lt">0.00</span></div><div class="td r" style="left:818.8px;top:275.1px;width:52.5px;height:36.2px;background:#f8f8fd;padding-top:4.8px"><span class="lt">0.00</span></div><div class="td r" style="left:871.3px;top:275.1px;width:65.7px;height:36.2px;background:#f8f8fd;padding-top:4.8px"><span class="lt">0.00</span></div><div class="td" style="left:937.0px;top:275.1px;width:74.3px;height:36.2px;background:#f8f8fd;padding-top:4.8px"></div><div class="abs" style="left:0;top:0;width:1px;height:286px;background:#c9d0ef"></div></div>
<div class="abs" style="left:204.5px;top:466px;width:976.5px;height:1px;background:#d3d9f2"></div>
<div class="abs" style="left:1043px;top:471.3px;width:41.7px;height:21px;border:1px solid #c8d0f2;border-radius:3px;background:#f4f5f7"></div>
<div class="abs" style="left:1063.6px;top:472px;width:1px;height:20px;background:#c8d0f2"></div>
<div class="abs" style="left:1088px;top:471.3px;width:21.7px;height:21px;border:1px solid #c8d0f2;border-radius:3px;background:#fff"></div>
<div class="abs" style="left:1129.3px;top:471.3px;width:41.4px;height:21px;border:1px solid #c8d0f2;border-radius:3px;background:#f4f5f7"></div>
<div class="abs" style="left:1149.4px;top:472px;width:1px;height:20px;background:#c8d0f2"></div>
<div class="abs pgt" style="left:1088px;top:471.3px;width:21.7px;text-align:center;color:#333">1</div>
<div class="abs pgt" style="left:1112px;top:471.3px;color:#444">/ 1</div>
<svg class="abs" style="left:1050.5px;top:478px" width="6" height="8" viewBox="0 0 6 8" fill="none" stroke="#b4b8c0" stroke-width="0.9"><path d="M0.5 0V8M5.5 0.5L1.5 4L5.5 7.5"/></svg>
<svg class="abs" style="left:1071.5px;top:478px" width="6" height="8" viewBox="0 0 6 8" fill="none" stroke="#b4b8c0" stroke-width="0.9"><path d="M4.5 0.5L1 4L4.5 7.5"/></svg>
<svg class="abs" style="left:1137px;top:478px" width="6" height="8" viewBox="0 0 6 8" fill="none" stroke="#b4b8c0" stroke-width="0.9"><path d="M1.5 0.5L5 4L1.5 7.5"/></svg>
<svg class="abs" style="left:1157px;top:478px" width="6" height="8" viewBox="0 0 6 8" fill="none" stroke="#b4b8c0" stroke-width="0.9"><path d="M5.5 0V8M0.5 0.5L4.5 4L0.5 7.5"/></svg>
<div class="sect" style="top:573px;height:160px"></div>
<div class="abs tab" style="left:199.0px;color:#5574e6;font-weight:bold">销售出库统计</div>
<div class="abs tab" style="left:270.3px">库存冻结统计</div>
<div class="abs tab" style="left:341.6px">计划出库统计</div>
<div class="abs tab" style="left:413.0px">销售退货统计</div>
<div class="abs tab" style="left:484.0px">销售换货统计</div>
<div class="abs" style="left:198px;top:604px;width:982px;height:1px;background:#e1e3ea"></div>
<div class="abs" style="left:199px;top:602.5px;width:55.5px;height:2px;background:#5574e6"></div>
<div class="card" style="left:198.0px;top:610.5px;width:342.0px;height:53px"><div class="lbl">出库时间</div><div class="op" style="right:12px;padding-right:10.5px">动态筛选<svg class="abs" style="right:0;top:4px" width="7" height="4" viewBox="0 0 7 4"><path d="M0 0H7L3.5 4Z" fill="#4d6ae0"/></svg></div><div class="sel" style="width:328.0px;"><svg class="abs" style="right:6px;top:7.5px" width="9" height="6" viewBox="0 0 9 6"><path d="M0.7 0.9L4.5 4.7L8.3 0.9" stroke="#5a78e6" stroke-width="1.05" fill="none"/></svg></div></div>
<div class="card" style="left:546.2px;top:610.5px;width:210.3px;height:53px"><div class="lbl">仓库</div><div class="op" style="right:12px;padding-right:10.5px">等于任意一个<svg class="abs" style="right:0;top:4px" width="7" height="4" viewBox="0 0 7 4"><path d="M0 0H7L3.5 4Z" fill="#4d6ae0"/></svg></div><div class="sel" style="width:196.3px;"><svg class="abs" style="right:6px;top:7.5px" width="9" height="6" viewBox="0 0 9 6"><path d="M0.7 0.9L4.5 4.7L8.3 0.9" stroke="#5a78e6" stroke-width="1.05" fill="none"/></svg></div></div>
<div class="card" style="left:762.8px;top:610.5px;width:210.0px;height:53px"><div class="lbl">销售订单名称</div><div class="op" style="right:12px;padding-right:10.5px">等于任意一个<svg class="abs" style="right:0;top:4px" width="7" height="4" viewBox="0 0 7 4"><path d="M0 0H7L3.5 4Z" fill="#4d6ae0"/></svg></div><div class="sel" style="width:196.0px;"><svg class="abs" style="right:6px;top:7.5px" width="9" height="6" viewBox="0 0 9 6"><path d="M0.7 0.9L4.5 4.7L8.3 0.9" stroke="#5a78e6" stroke-width="1.05" fill="none"/></svg></div></div>
<div class="card" style="left:978.0px;top:610.5px;width:210.0px;height:53px"><div class="lbl">客户名称</div><div class="op" style="right:12px;padding-right:10.5px">等于任意一个<svg class="abs" style="right:0;top:4px" width="7" height="4" viewBox="0 0 7 4"><path d="M0 0H7L3.5 4Z" fill="#4d6ae0"/></svg></div><div class="sel" style="width:196.0px;"><svg class="abs" style="right:6px;top:7.5px" width="9" height="6" viewBox="0 0 9 6"><path d="M0.7 0.9L4.5 4.7L8.3 0.9" stroke="#5a78e6" stroke-width="1.05" fill="none"/></svg></div></div>
<div class="card" style="left:198px;top:670px;width:192px;height:80px"><div class="abs" style="left:0;top:8px;width:192px;text-align:center;font-size:9.4px;line-height:13px;color:#555">出库单数</div><div class="abs" style="left:0;top:48px;width:192px;text-align:center;font-size:22px;line-height:30px;color:#6a84ea;font-weight:bold">1</div></div>
<div class="card" style="left:397px;top:670px;width:791px;height:80px"><div class="abs" style="left:7px;top:8px;font-size:9.4px;line-height:13px;color:#555;white-space:nowrap">销售出库统计</div></div>
<div class="abs" style="left:404px;top:697px;width:771px;height:40px;overflow:hidden;background:#8193d7"><div class="abs" style="left:7px;top:1px;font-size:8.5px;line-height:21.6px;color:#fff">出库时间</div><div class="abs" style="left:615px;top:0;width:1px;height:21.6px;background:#aab6e6"></div><div class="abs" style="left:622px;top:1px;font-size:8.5px;line-height:21.6px;color:#fff">汇总</div><div class="abs" style="left:761px;top:0;width:1px;height:21.6px;background:#aab6e6"></div><div class="abs" style="left:767px;top:0;font-size:8.5px;line-height:21.6px;color:#fff">2</div><div class="abs" style="left:0;top:21.6px;width:771px;height:1px;background:#aab6e6"></div><div class="abs" style="left:81.7px;top:21.6px;width:1px;height:20px;background:#aab6e6"></div><div class="abs" style="left:164.7px;top:21.6px;width:1px;height:20px;background:#aab6e6"></div><div class="abs" style="left:210.3px;top:21.6px;width:1px;height:20px;background:#aab6e6"></div><div class="abs" style="left:292.7px;top:21.6px;width:1px;height:20px;background:#aab6e6"></div><div class="abs" style="left:342.7px;top:21.6px;width:1px;height:20px;background:#aab6e6"></div><div class="abs" style="left:394.3px;top:21.6px;width:1px;height:20px;background:#aab6e6"></div><div class="abs" style="left:464.3px;top:21.6px;width:1px;height:20px;background:#aab6e6"></div><div class="abs" style="left:516.0px;top:21.6px;width:1px;height:20px;background:#aab6e6"></div><div class="abs" style="left:615.0px;top:21.6px;width:1px;height:20px;background:#aab6e6"></div><div class="abs" style="left:681.0px;top:21.6px;width:1px;height:20px;background:#aab6e6"></div><div class="abs" style="left:761.0px;top:21.6px;width:1px;height:20px;background:#aab6e6"></div></div>
<div class="abs" style="left:1180px;top:697px;width:1px;height:30px;background:#d3d9f2"></div>
<div class="sb"></div><div class="sbthumb"></div></body></html>
